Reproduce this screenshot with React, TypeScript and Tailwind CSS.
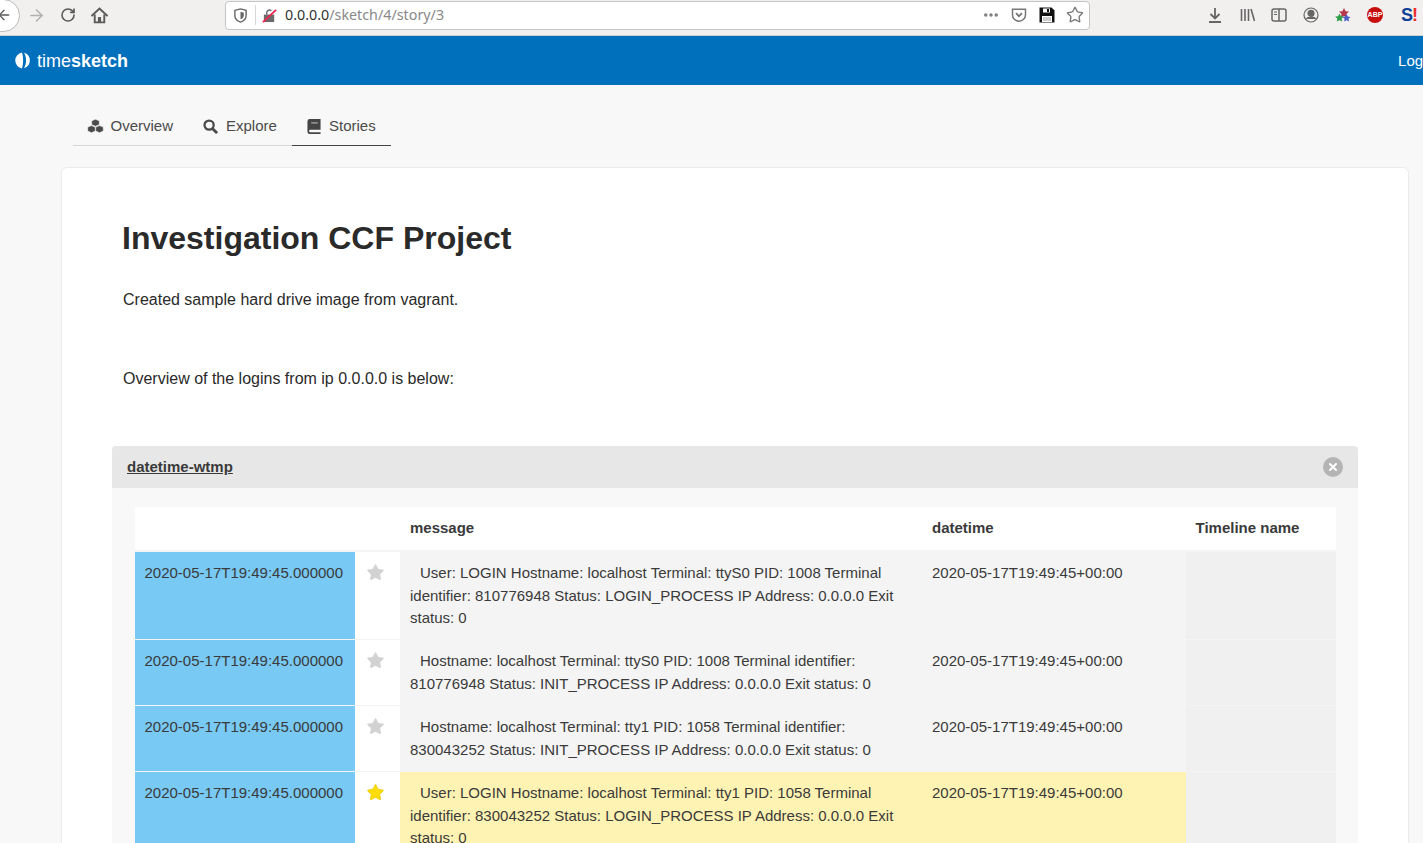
import { X, RotateCw, ArrowRight, ArrowLeft, MoreHorizontal, Star } from 'lucide-react';

const ROWS = [
  {
    id: 1,
    h: 'h-[88px]',
    msg: 'User: LOGIN Hostname: localhost Terminal: ttyS0 PID: 1008 Terminal identifier: 810776948 Status: LOGIN_PROCESS IP Address: 0.0.0.0 Exit status: 0',
  },
  {
    id: 2,
    h: 'h-[66px]',
    msg: 'Hostname: localhost Terminal: ttyS0 PID: 1008 Terminal identifier: 810776948 Status: INIT_PROCESS IP Address: 0.0.0.0 Exit status: 0',
  },
  {
    id: 3,
    h: 'h-[66px]',
    msg: 'Hostname: localhost Terminal: tty1 PID: 1058 Terminal identifier: 830043252 Status: INIT_PROCESS IP Address: 0.0.0.0 Exit status: 0',
  },
  {
    id: 4,
    h: 'h-[88px]',
    starred: true,
    msg: 'User: LOGIN Hostname: localhost Terminal: tty1 PID: 1058 Terminal identifier: 830043252 Status: LOGIN_PROCESS IP Address: 0.0.0.0 Exit status: 0',
  },
];

function BrowserBar() {
  return (
    <div className="flex h-[36px] items-center border-b border-[#cfcfcf] bg-[#f2f0ef] pb-[5px] text-[#5a5a5a]">
      {/* back button circle runs off the left edge */}
      <div className="ml-[-16px] flex h-[33px] w-[36px] flex-shrink-0 items-center justify-end rounded-full border border-[#b8b8b8] bg-white pr-[7px]">
        <ArrowLeft size={16} strokeWidth={2} />
      </div>
      <ArrowRight size={19} strokeWidth={2} className="ml-[7px] text-[#b1b1b1]" />
      <RotateCw size={16} strokeWidth={2.4} className="ml-[14px]" />
      <svg viewBox="0 0 16 16" className="ml-[15px] h-[17px] w-[17px]" fill="none" stroke="#5a5a5a" strokeWidth="1.8">
        <path d="M1 8l7-6.500L15 8" strokeLinecap="round" />
        <path d="M3.500 7v7.500h9V7" />
        <rect x="6.500" y="9.500" width="3" height="5" fill="#5a5a5a" stroke="none" />
      </svg>
      <div className="ml-[117px] flex h-[29px] w-[865px] flex-shrink-0 items-center rounded-[4px] border border-[#c4c4c4] bg-white">
        <svg viewBox="0 0 16 16" className="ml-[7px] h-[15px] w-[15px]">
          <path d="M2 2.500L8 1l6 1.500V8c0 3.500-3 6-6 7-3-1-6-3.500-6-7z" fill="none" stroke="#666" strokeWidth="1.500" />
          <path d="M8 4l3.500 1V8c0 2-1.700 3.500-3.500 4.300z" fill="#666" />
        </svg>
        <div className="ml-[7px] h-[20px] w-px bg-[#d8d8d8]" />
        <svg viewBox="0 0 16 16" className="ml-[6px] h-[15px] w-[15px]">
          <rect x="2" y="7" width="11" height="8" fill="#6b6b6b" />
          <path d="M5 7V5a3 3 0 0 1 5-2" fill="none" stroke="#6b6b6b" strokeWidth="1.600" />
          <path d="M1 15L15 2" stroke="#f0244f" strokeWidth="2" />
        </svg>
        <span className="ml-[8px] font-['Noto_Sans',sans-serif] text-[14.3px] text-[#333]">0.0.0.0</span>
        <span className="font-['Noto_Sans',sans-serif] text-[14.3px] text-[#888]">/sketch/4/story/3</span>
        <div className="ml-auto flex items-center">
          <MoreHorizontal size={18} strokeWidth={2.6} className="text-[#7a7a7a]" />
          <svg viewBox="0 0 16 16" className="ml-[11px] h-[16px] w-[16px]" fill="none" stroke="#777" strokeWidth="1.500">
            <path d="M1.500 2.200h13v5.500a6.500 6.500 0 0 1-13 0z" />
            <path d="M5 6.200l3 3 3-3" strokeWidth="1.800" />
          </svg>
          <svg viewBox="0 0 16 16" className="ml-[12px] h-[16px] w-[16px]">
            <path d="M0.500 0.500h12l3 3v12h-15z" fill="#111" />
            <rect x="4" y="1.500" width="7" height="4" fill="#fff" />
            <rect x="8" y="2" width="2" height="3" fill="#111" />
            <rect x="3" y="9" width="10" height="6" fill="#fff" />
            <path d="M4 11h8M4 13h8" stroke="#999" />
          </svg>
          <Star size={18} strokeWidth={1.8} className="ml-[11px] mr-[5px] text-[#777]" />
        </div>
      </div>
      <div className="ml-[117px] flex items-center">
        <svg viewBox="0 0 16 16" className="mr-[16px] h-[16px] w-[16px]" fill="none" stroke="#666" strokeWidth="1.800">
          <path d="M8 1v10M3.500 7L8 11.500 12.500 7M2 15h12" />
        </svg>
        <svg viewBox="0 0 16 16" className="mr-[16px] h-[16px] w-[16px]" stroke="#666" strokeWidth="1.600" fill="none">
          <path d="M2.500 2v12M6 2v12M9.500 2v12M12 2l3.500 12" />
        </svg>
        <svg viewBox="0 0 16 16" className="mr-[16px] h-[16px] w-[16px]" stroke="#666" strokeWidth="1.500" fill="none">
          <rect x="1" y="2" width="14" height="12" rx="2" />
          <path d="M8 2v12" />
          <path d="M3 5h3M3 7.500h3" strokeWidth="1" />
        </svg>
        <svg viewBox="0 0 16 16" className="mr-[16px] h-[16px] w-[16px]" fill="none" stroke="#666" strokeWidth="1.200">
          <circle cx="8" cy="8" r="7" />
          <circle cx="8" cy="6.300" r="3" fill="#666" />
          <path d="M3.300 12c1.500-2.500 8-2.500 9.400 0" fill="#666" />
        </svg>
        <svg viewBox="0 0 16 16" className="mr-[16px] h-[17px] w-[16px]">
          <path d="M9 0.500l1.600 3.200 3.400.4-2.500 2.400.6 3.400L9 8.400 5.900 10l.6-3.400L4 4.100l3.400-.4z" fill="#b5384c" />
          <path d="M4.500 6l1.400 2.700 3 .4-2.200 2 .5 3L4.500 12.700l-2.700 1.400.5-3-2.200-2 3-.4z" fill="#2f9e48" />
          <path d="M11.500 6.500l1.300 2.500 2.700.4-2 1.900.5 2.700-2.500-1.300-2.400 1.300.5-2.700-2-1.900 2.700-.4z" fill="#4a5fc4" />
        </svg>
        <div className="mr-[18px] flex h-[16px] w-[16px] items-center justify-center rounded-full bg-[#c70d0d] font-['Liberation_Sans',sans-serif] text-[7px] font-bold text-white">
          ABP
        </div>
        <span className="whitespace-nowrap font-['Liberation_Sans',sans-serif] text-[18px] leading-none font-bold tracking-[-1px]">
          <span className="text-[#0f3f96]">S</span>
          <span className="text-[#ef2b2b]">!</span>
        </span>
      </div>
    </div>
  );
}

function NavBar() {
  return (
    <div className="flex h-[49px] items-center overflow-hidden bg-[#0070bd] pl-[15px] text-white">
      <svg viewBox="0 0 16 16" className="h-[17px] w-[16px]">
        <path d="M7 0.100A8 8 0 0 0 7 15.900C8.500 11 8.500 5 7 0.100z" fill="#fff" />
        <path d="M9 0.300A8 8 0 0 1 9 15.700C11.800 11 11.800 5 9 0.300z" fill="#fff" />
      </svg>
      <span className="ml-[6px] mt-[2px] text-[18px]">
        time<span className="font-bold">sketch</span>
      </span>
      <span className="ml-auto mr-[-21px] mt-[1px] text-[15px]">Logout</span>
    </div>
  );
}

function Tabs() {
  return (
    <div className="ml-[73px] flex h-[61px] items-end text-[15px] text-[#4a4a4a]">
      <div className="flex h-[45px] w-[100px] items-center justify-end border-b border-[#d8d8d8] pt-[6px]">
        <svg viewBox="0 0 17 15" className="mr-[6px] h-[15px] w-[17px]" fill="#4a4a4a" stroke="#f8f8f8" strokeWidth="0.600">
          <path d="M8.500 0.300l3.800 1.500v3.900L8.500 7.300 4.700 5.700V1.800z" />
          <path d="M4.500 6.600l3.800 1.500v4L4.500 13.800.7 12.100v-4z" />
          <path d="M12.500 6.600l3.800 1.500v4l-3.800 1.700-3.800-1.700v-4z" />
        </svg>
        Overview
      </div>
      <div className="flex h-[45px] w-[119px] items-center border-b border-[#d8d8d8] pl-[30px] pt-[6px]">
        <svg viewBox="0 0 16 16" className="mr-[8px] h-[15px] w-[15px]" fill="none" stroke="#4a4a4a">
          <circle cx="6.500" cy="6.500" r="4.900" strokeWidth="2.400" />
          <path d="M10.300 10.300L15 15" strokeWidth="3" />
        </svg>
        Explore
      </div>
      <div className="flex h-[45px] w-[99px] items-center border-b border-[#444] pl-[15px] pt-[6px]">
        <svg viewBox="0 0 14 16" className="mr-[8px] h-[15px] w-[14px]" fill="#444">
          <path d="M2.500 0H14v11.500H3a1 1 0 0 0 0 2.500h11v2H2.500A2.500 2.500 0 0 1 0 13.500v-11A2.500 2.500 0 0 1 2.500 0z" />
          <path d="M4 3.500h7v1.300H4z" fill="#aaa" />
        </svg>
        Stories
      </div>
    </div>
  );
}

function EventRow({ msg, h, starred }: { msg: string; h: string; starred?: boolean }) {
  return (
    <div className={`grid ${h} grid-cols-[220px_45px_522px_264px_150px] border-b border-[#f4f4f4]`}>
      <div className="bg-[#78c9f4] pl-[9.5px] pt-[10px]">2020-05-17T19:49:45.000000</div>
      <div className="flex justify-center bg-white pr-[4px] pt-[11px]">
        <Star
          size={19}
          strokeWidth={1}
          className={starred ? 'fill-[#ffdd00] text-[#e8c900]' : 'fill-[#d2d2d2] text-[#d2d2d2]'}
        />
      </div>
      <div className={`px-[10px] pt-[10px] indent-[10px] ${starred ? 'bg-[#fff3b3]' : 'bg-[#f4f4f4]'}`}>{msg}</div>
      <div className={`pl-[10px] pt-[10px] ${starred ? 'bg-[#fff3b3]' : 'bg-[#f4f4f4]'}`}>2020-05-17T19:49:45+00:00</div>
      <div className="bg-[#f0f0f0]" />
    </div>
  );
}

export default function App() {
  return (
    <div className="h-[843px] w-[1423px] overflow-hidden bg-[#f8f8f8] font-['Liberation_Sans',Arial,sans-serif] text-[15px] leading-[22.5px] text-[#3a3a3a]">
      <BrowserBar />
      <NavBar />
      <Tabs />
      <div className="ml-[61px] mr-[14px] mt-[21px] h-[700px] rounded-t-[6px] border border-[#ebebeb] bg-white px-[50px] pt-[51px]">
        <h1 className="ml-[10px] text-[32px] leading-[38px] font-bold text-[#2a2a2a]">Investigation CCF Project</h1>
        <p className="ml-[11px] mt-[31px] text-[16px] leading-[24px] text-[#2a2a2a]">Created sample hard drive image from vagrant.</p>
        <p className="ml-[11px] mt-[55px] text-[16px] leading-[24px] text-[#2a2a2a]">Overview of the logins from ip 0.0.0.0 is below:</p>
        <div className="mt-[55px] rounded-t-[4px] bg-[#f8f8f8]">
          <div className="flex h-[42px] items-center justify-between rounded-t-[4px] bg-[#e7e7e7] pl-[15px] pr-[15px]">
            <span className="font-bold underline">datetime-wtmp</span>
            <div className="flex h-[20px] w-[20px] items-center justify-center rounded-full bg-[#b4b4b4]">
              <X size={12} strokeWidth={4} className="text-white" />
            </div>
          </div>
          <div className="pl-[23px] pr-[22px] pt-[19px]">
            <div className="grid h-[45px] grid-cols-[265px_522px_264px_150px] items-center border-b-2 border-[#f4f4f4] bg-white font-bold">
              <div />
              <div className="pl-[10px]">message</div>
              <div className="pl-[10px]">datetime</div>
              <div className="pl-[9.5px]">Timeline name</div>
            </div>
            {ROWS.map(row => (
              <EventRow key={row.id} msg={row.msg} h={row.h} starred={row.starred} />
            ))}
          </div>
        </div>
      </div>
    </div>
  );
}
